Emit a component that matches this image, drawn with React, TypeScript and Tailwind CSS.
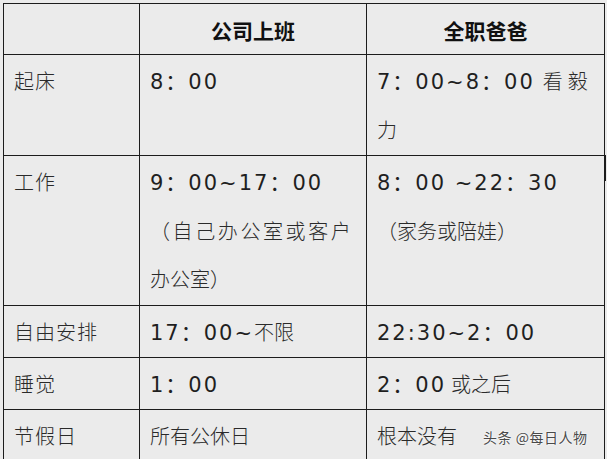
const cjk = "font-['Noto_Sans_CJK_SC','Noto_Sans',sans-serif]"

// digits + latin part of the schedule use a rounder face
function T({ children }: { children: React.ReactNode }) {
  return <span className="font-['DejaVu_Sans','Noto_Sans_CJK_SC',sans-serif] text-[21px] tracking-[2px] font-normal text-[#1f1f1f]">{children}</span>
}

const cell = "border-[1.5px] border-[#1c1c1c] align-top pt-[2px] leading-[48px] text-[20px] font-light text-[#2a2a2a] whitespace-nowrap"

export default function App() {
  return (
    <div className={`w-[607px] h-[459px] bg-[#ebebeb] pt-[3px] pl-[3px] overflow-hidden relative ${cjk}`}>
      <table className="border-collapse table-fixed w-[601px]">
        <colgroup>
          <col className="w-[136px]" />
          <col className="w-[227px]" />
          <col className="w-[238px]" />
        </colgroup>
        <thead>
          <tr className="h-[51px]">
            <th className="border-[1.5px] border-[#1c1c1c]" />
            <th className="border-[1.5px] border-[#1c1c1c] text-center align-middle text-[21px] font-bold text-[#111] pt-[3px]">公司上班</th>
            <th className="border-[1.5px] border-[#1c1c1c] text-center align-middle text-[21px] font-bold text-[#111] pt-[3px]">全职爸爸</th>
          </tr>
        </thead>
        <tbody>
          <tr className="h-[101px]">
            <td className={`${cell} pl-[10px] tracking-[1px]`}>起床</td>
            <td className={`${cell} pl-[10px]`}><T>8：00</T></td>
            <td className={`${cell} pl-[10px]`}>
              <T>7：00~8：00</T><span className="ml-[8px] tracking-[5px]">看毅</span>
              <br />力
            </td>
          </tr>
          <tr className="h-[150px]">
            <td className={`${cell} pl-[10px] tracking-[1px]`}>工作</td>
            <td className={`${cell} pl-[10px]`}>
              <T>9：00~17：00</T>
              <br /><span className="tracking-[2.6px]">（自己办公室或客户</span>
              <br />办公室）
            </td>
            <td className={`${cell} pl-[10px]`}>
              <span className="font-bold"><T>8：00 ~22：30</T></span>
              <br />（家务或陪娃）
            </td>
          </tr>
          <tr className="h-[52px]">
            <td className={`${cell} pl-[10px] tracking-[1px]`}>自由安排</td>
            <td className={`${cell} pl-[10px]`}><T>17：00~</T>不限</td>
            <td className={`${cell} pl-[10px]`}><T>22:30~2：00</T></td>
          </tr>
          <tr className="h-[50px]">
            <td className={`${cell} pl-[10px] tracking-[1px]`}>睡觉</td>
            <td className={`${cell} pl-[10px]`}><T>1：00</T></td>
            <td className={`${cell} pl-[10px]`}><T>2：00</T><span className="ml-[5px]">或之后</span></td>
          </tr>
          <tr className="h-[50px]">
            <td className={`${cell} pl-[10px] tracking-[1px]`}>节假日</td>
            <td className={`${cell} pl-[10px]`}>所有公休日</td>
            <td className={`${cell} pl-[10px] relative`}>
              根本没有
              <span className="absolute left-[116px] top-[17px] leading-[20px] text-[14px] font-normal tracking-[0.5px] text-[#4a4a4a] [text-shadow:0_0_2px_#fff,0_0_2px_#fff]">
                头条 @每日人物
              </span>
            </td>
          </tr>
        </tbody>
      </table>
      <span className="absolute left-[604px] top-[155px] w-[2px] h-[26px] bg-[#1c1c1c]" />
    </div>
  )
}
